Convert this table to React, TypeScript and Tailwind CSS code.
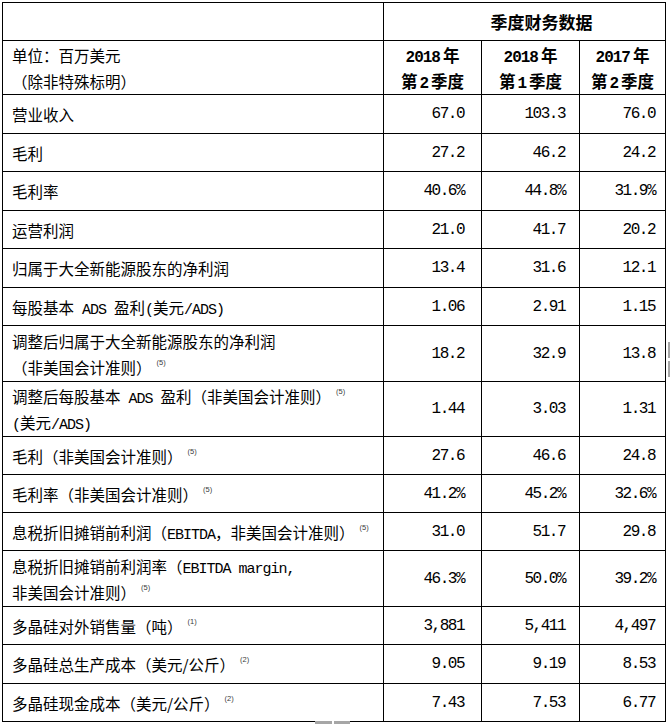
import React from "react";

function M({ children }: { children: React.ReactNode }) {
  return (
    <span className="font-['Liberation_Mono',monospace] text-[15px] leading-none tracking-[-1px]">{children}</span>
  );
}

function Sup({ n }: { n: string }) {
  return (
    <span className="relative top-[-9px] ml-[5px] align-baseline font-['Liberation_Sans',sans-serif] text-[7.5px] leading-none text-[#3a3a3a]">
      ({n})
    </span>
  );
}

type Row = { lines: React.ReactNode[]; v: string[]; h: string };

const rows: Row[] = [
  { lines: ["营业收入"], v: ["67.0", "103.3", "76.0"], h: "h-[39px]" },
  { lines: ["毛利"], v: ["27.2", "46.2", "24.2"], h: "h-[38px]" },
  { lines: ["毛利率"], v: ["40.6%", "44.8%", "31.9%"], h: "h-[39px]" },
  { lines: ["运营利润"], v: ["21.0", "41.7", "20.2"], h: "h-[38px]" },
  { lines: ["归属于大全新能源股东的净利润"], v: ["13.4", "31.6", "12.1"], h: "h-[39px]" },
  {
    lines: [
      <>
        每股基本<M> ADS </M>盈利<M>(</M>美元<M>/ADS)</M>
      </>,
    ],
    v: ["1.06", "2.91", "1.15"],
    h: "h-[38px]",
  },
  {
    lines: [
      "调整后归属于大全新能源股东的净利润",
      <>
        （非美国会计准则）<Sup n="5" />
      </>,
    ],
    v: ["18.2", "32.9", "13.8"],
    h: "h-[56px]",
  },
  {
    lines: [
      <>
        调整后每股基本<M> ADS </M>盈利（非美国会计准则）<Sup n="5" />
      </>,
      <>
        <M>(</M>美元<M>/ADS)</M>
      </>,
    ],
    v: ["1.44", "3.03", "1.31"],
    h: "h-[55px]",
  },
  {
    lines: [
      <>
        毛利（非美国会计准则）<Sup n="5" />
      </>,
    ],
    v: ["27.6", "46.6", "24.8"],
    h: "h-[38px]",
  },
  {
    lines: [
      <>
        毛利率（非美国会计准则）<Sup n="5" />
      </>,
    ],
    v: ["41.2%", "45.2%", "32.6%"],
    h: "h-[38px]",
  },
  {
    lines: [
      <>
        息税折旧摊销前利润（<M>EBITDA</M>，非美国会计准则）<Sup n="5" />
      </>,
    ],
    v: ["31.0", "51.7", "29.8"],
    h: "h-[38px]",
  },
  {
    lines: [
      <>
        息税折旧摊销前利润率（<M>EBITDA margin,</M>
      </>,
      <>
        非美国会计准则）<Sup n="5" />
      </>,
    ],
    v: ["46.3%", "50.0%", "39.2%"],
    h: "h-[56px]",
  },
  {
    lines: [
      <>
        多晶硅对外销售量（吨）<Sup n="1" />
      </>,
    ],
    v: ["3,881", "5,411", "4,497"],
    h: "h-[38px]",
  },
  {
    lines: [
      <>
        多晶硅总生产成本（美元/公斤）<Sup n="2" />
      </>,
    ],
    v: ["9.05", "9.19", "8.53"],
    h: "h-[39px]",
  },
  {
    lines: [
      <>
        多晶硅现金成本（美元/公斤）<Sup n="2" />
      </>,
    ],
    v: ["7.43", "7.53", "6.77"],
    h: "h-[38px]",
  },
];

const pads = ["pr-[17px]", "pr-[14px]", "pr-[10px]"];

export default function App() {
  return (
    <div className="relative h-[724px] w-[670px] overflow-hidden bg-white pl-[2px] pt-[2px] text-black">
      <div className="w-[664px] border-l border-t border-black font-['Noto_Sans_CJK_SC',sans-serif] text-[15.5px]">
        {/* 表头 */}
        <div className="grid h-[38px] grid-cols-[381px_282px]">
          <div className="border-b border-r border-black" />
          <div className="flex items-center justify-center border-b border-r border-black pl-[34px] text-[17px] font-bold">
            季度财务数据
          </div>
        </div>
        <div className="grid h-[54px] grid-cols-[381px_98px_98px_86px]">
          <div className="flex flex-col justify-center border-b border-r border-black pl-[9px] leading-[26px]">
            <div className="h-[26px]">单位：百万美元</div>
            <div className="h-[26px]">（除非特殊标明）</div>
          </div>
          {[
            ["2018", "2"],
            ["2018", "1"],
            ["2017", "2"],
          ].map((c, i) => (
            <div
              key={i}
              className="flex flex-col items-center justify-center border-b border-r border-black text-[16.5px] font-bold leading-[26px]"
            >
              <div className="h-[26px]">
                <span className="mr-[3px] font-['Liberation_Mono',monospace] text-[16px] leading-none tracking-[-1px]">{c[0]}</span>年
              </div>
              <div className="h-[26px]">
                第<span className="mx-[2px] font-['Liberation_Mono',monospace] text-[16px] leading-none">{c[1]}</span>季度
              </div>
            </div>
          ))}
        </div>

        {/* 数据行 */}
        {rows.map((r, i) => (
          <div key={i} className={`grid grid-cols-[381px_98px_98px_86px] overflow-hidden ${r.h}`}>
            <div className="flex flex-col justify-center border-b border-r border-black pl-[9px] leading-[26px]">
              {r.lines.map((l, j) => (
                <div key={j} className="h-[26px] whitespace-nowrap">
                  {l}
                </div>
              ))}
            </div>
            {r.v.map((v, j) => (
              <div
                key={j}
                className={`flex items-center justify-end border-b border-r border-black font-['Liberation_Mono',monospace] text-[16px] tracking-[-1.5px] ${pads[j]}`}
              >
                {v}
              </div>
            ))}
          </div>
        ))}
      </div>

      {/* 右侧与底部的小把手 */}
      <div className="absolute left-[668px] top-[342px] flex h-[35px] w-[3px] flex-col bg-[#a6a6a6]">
        <div className="mt-[16px] h-[3px] w-[2px] bg-white" />
      </div>
      <div className="absolute left-[315px] top-[721px] flex h-[3px] w-[35px] bg-[#a6a6a6]">
        <div className="ml-[17px] h-[3px] w-[2px] bg-white" />
      </div>
    </div>
  );
}
